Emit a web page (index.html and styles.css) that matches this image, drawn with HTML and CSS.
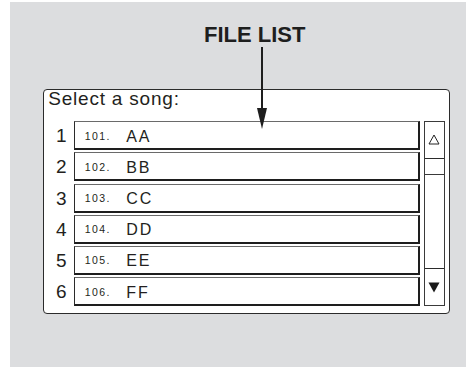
FILE: index.html
```html
<!DOCTYPE html>
<html lang="en">
<head>
    <meta charset="UTF-8">
    <meta name="viewport" content="width=device-width, initial-scale=1.0">
    <title>File list</title>
    <link rel="stylesheet" href="styles.css">
</head>
<body>
    <div class="screen">
        <div class="title">FILE LIST</div>

        <svg class="pointer" width="12" height="82" viewBox="0 0 12 82">
            <line x1="6" y1="0" x2="6" y2="64" stroke="#1e1e1e" stroke-width="2"/>
            <polygon points="1,61 11,61 6,82" fill="#1e1e1e"/>
        </svg>

        <div class="panel">
            <div class="prompt">Select a song:</div>
            <div class="browser">
                <ul class="songs">
                    <li class="song"><span class="num">1</span><div class="entry"><span class="idx">101.</span><span class="name">AA</span></div></li>
                    <li class="song"><span class="num">2</span><div class="entry"><span class="idx">102.</span><span class="name">BB</span></div></li>
                    <li class="song"><span class="num">3</span><div class="entry"><span class="idx">103.</span><span class="name">CC</span></div></li>
                    <li class="song"><span class="num">4</span><div class="entry"><span class="idx">104.</span><span class="name">DD</span></div></li>
                    <li class="song"><span class="num">5</span><div class="entry"><span class="idx">105.</span><span class="name">EE</span></div></li>
                    <li class="song"><span class="num">6</span><div class="entry"><span class="idx">106.</span><span class="name">FF</span></div></li>
                </ul>
                <div class="scroll">
                    <div class="btn up">
                        <svg width="12" height="11" viewBox="0 0 12 11"><polygon points="6,1 11,10 1,10" fill="none" stroke="#222" stroke-width="1"/></svg>
                    </div>
                    <div class="thumb"></div>
                    <div class="track"></div>
                    <div class="btn down">
                        <svg width="12" height="11" viewBox="0 0 12 11"><polygon points="0.5,0.5 11.5,0.5 6,10.5" fill="#1a1a1a"/></svg>
                    </div>
                </div>
            </div>
        </div>
    </div>
</body>
</html>
```

FILE: styles.css
```css
body {
    margin: 0;
    background: #fff;
    font-family: "Liberation Sans", Arial, sans-serif;
    color: #231f20;
    overflow: hidden;
}
.screen {
    position: relative;
    margin: 2px 0 0 10px;
    width: 456px;
    height: 365px;
    padding-top: 19.8px;
    box-sizing: border-box;
    background: #dcdddf;
}
.title {
    margin-left: 194px;
    font-size: 22px;
    font-weight: bold;
    line-height: 26px;
    color: #1e1e1e;
}
.pointer {
    position: absolute;
    left: 245.7px;
    top: 45px;
    z-index: 2;
}
.panel {
    margin: 41.2px 0 0 32.7px;
    width: 407px;
    box-sizing: border-box;
    padding: 0 3.7px 6.8px 0;
    background: #fff;
    border: 1.5px solid #2b2b2b;
    border-radius: 4px;
}
.prompt {
    padding: 1px 0 0 4.5px;
    font-size: 19px;
    line-height: 15px;
    letter-spacing: 0.8px;
}
.browser {
    display: flex;
    margin-top: 15.2px;
    height: 185px;
}
.songs {
    flex: 1;
    display: flex;
    flex-direction: column;
    gap: 2.2px;
    list-style: none;
    margin: 0;
    padding: 0;
}
.song {
    display: flex;
    height: 29px;
}
.num {
    width: 30px;
    padding-right: 7px;
    box-sizing: border-box;
    text-align: right;
    font-size: 19px;
    line-height: 29px;
}
.entry {
    flex: 1;
    display: flex;
    align-items: center;
    padding-left: 10px;
    border-top: 1px solid #6a6a6a;
    border-left: 1px solid #2b2b2b;
    border-right: 2px solid #1e1e1e;
    border-bottom: 2px solid #1e1e1e;
}
.idx {
    width: 41.5px;
    font-size: 10.5px;
    letter-spacing: 1.4px;
    padding-top: 1px;
}
.name {
    font-size: 16px;
    letter-spacing: 2px;
    padding-top: 3px;
}
.scroll {
    width: 21.5px;
    margin-left: 4px;
    display: flex;
    flex-direction: column;
    border: 1.5px solid #3a3a3a;
    box-sizing: border-box;
}
.btn {
    display: flex;
    align-items: center;
    justify-content: center;
}
.up {
    height: 35.5px;
    border-bottom: 1.5px solid #2b2b2b;
}
.thumb {
    height: 15px;
    border-bottom: 1.5px solid #3a3a3a;
}
.track {
    flex: 1;
}
.down {
    height: 36px;
    border-top: 1.5px solid #2b2b2b;
}
```
